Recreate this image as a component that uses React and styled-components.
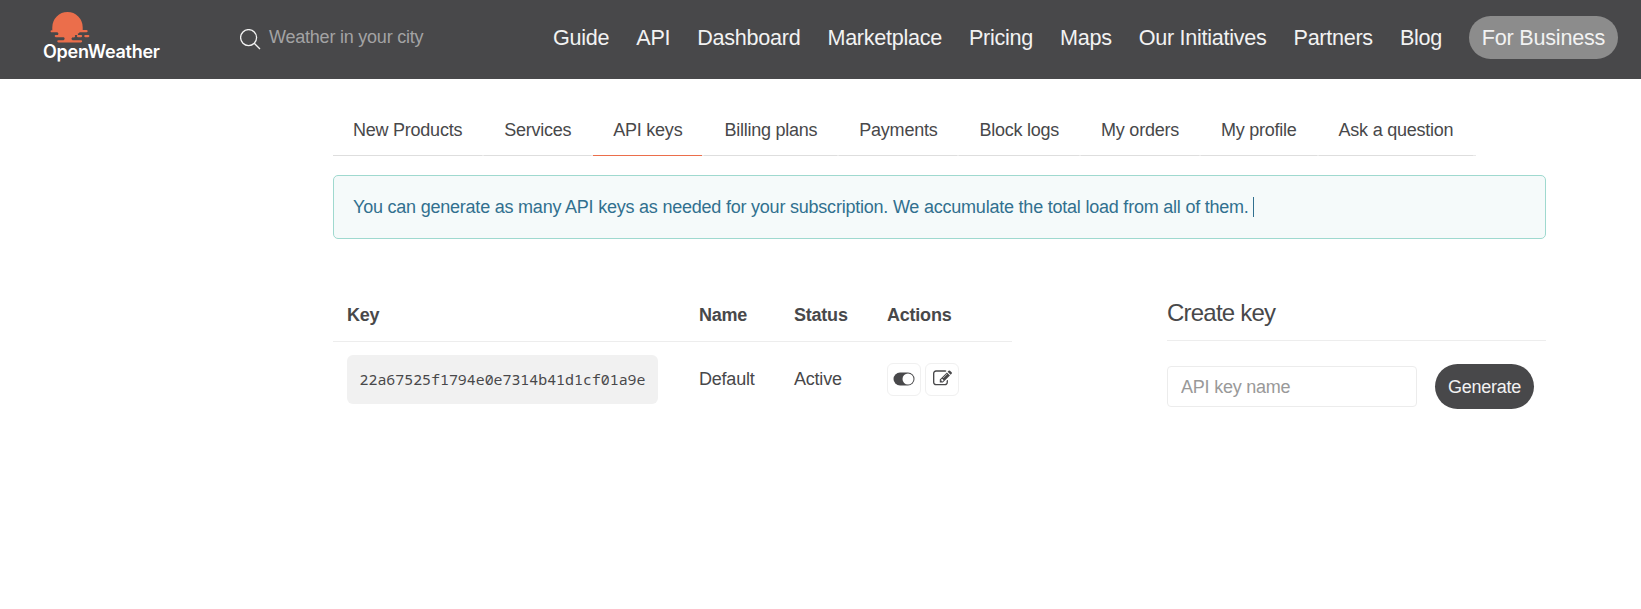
import React from "react";
import styled, { createGlobalStyle } from "styled-components";

const GlobalStyle = createGlobalStyle`
  * { box-sizing: border-box; }
  body {
    margin: 0;
    background: #fff;
    color: #48484a;
    font-family: "Liberation Sans", Arial, sans-serif;
    font-size: 18px;
    line-height: 24px;
    letter-spacing: -0.22px;
  }
`;

const Header = styled.header`
  display: flex;
  align-items: flex-start;
  height: 79px;
  padding: 0 23px 0 43px;
  background: #48484a;
`;

const Logo = styled.a`
  display: flex;
  flex-direction: column;
  width: 197px;
  padding-top: 11px;
  color: #fff;
`;

const LogoMark = styled.svg`
  display: block;
  width: 42px;
  height: 33px;
  margin-left: 6px;
`;

const LogoText = styled.span`
  margin-top: -2px;
  font-family: Inter, sans-serif;
  font-size: 18px;
  font-weight: 600;
  line-height: 20px;
  letter-spacing: -0.27px;
`;

const Search = styled.div`
  display: flex;
  gap: 8px;
  padding-top: 25px;
  color: #a3a3a4;
`;

const SearchIcon = styled.svg`
  width: 21px;
  height: 21px;
  margin-top: 4px;
`;

const Nav = styled.nav`
  display: flex;
  align-items: center;
  gap: 27px;
  height: 43px;
  margin: 16px 0 0 auto;
  font-size: 21.6px;
  letter-spacing: -0.28px;
  color: #f2f2f2;
  white-space: nowrap;
`;

const NavLink = styled.a``;

const BusinessLink = styled.a`
  display: flex;
  align-items: center;
  justify-content: center;
  width: 149px;
  height: 43px;
  border-radius: 22px;
  background: #8c8c8c;
  letter-spacing: -0.22px;
`;

const Main = styled.main`
  padding: 20px 95px 0 333px;
`;

const Tabs = styled.nav`
  display: flex;
  gap: 2px;
  width: 1143px;
  height: 57px;
  background: linear-gradient(#e9e9e9, #e9e9e9) bottom / 100% 1px no-repeat;
  letter-spacing: -0.24px;
`;

const Tab = styled.a`
  padding: 19px 20px 0;
  border-bottom: 1px solid ${(p) => (p.$active ? "#eb6e4b" : "#dedede")};
  white-space: nowrap;
`;

const Notice = styled.div`
  display: flex;
  align-items: center;
  height: 64px;
  margin-top: 19px;
  padding: 0 19px;
  border: 1px solid #9fd9cf;
  border-radius: 5px;
  background: #f5fafa;
  color: #31708f;
`;

const Caret = styled.span`
  width: 1px;
  height: 20px;
  margin-left: 4px;
  background: #31708f;
`;

const Columns = styled.div`
  display: flex;
  justify-content: space-between;
  align-items: flex-start;
  margin-top: 50px;
`;

const KeyTable = styled.table`
  width: 679px;
  border-collapse: separate;
  border-spacing: 0;
  table-layout: fixed;
  text-align: left;
`;

const HeadCell = styled.th`
  width: ${(p) => p.$width}px;
  height: 53px;
  padding: 0 0 1px 14px;
  border-bottom: 1px solid #ededed;
`;

const Cell = styled.td`
  height: 62px;
  padding: 13px 0 0 14px;
`;

const TextCell = styled(Cell)`
  padding-bottom: 2px;
`;

const KeyCode = styled.code`
  display: flex;
  align-items: center;
  justify-content: center;
  width: 311px;
  height: 49px;
  padding-bottom: 1px;
  border-radius: 6px;
  background: #f1f1f1;
  font-family: "Noto Sans Mono", "DejaVu Sans Mono", monospace;
  font-size: 14.9px;
  letter-spacing: 0;
`;

const Actions = styled.div`
  display: flex;
  gap: 4px;
`;

const IconButton = styled.button`
  display: flex;
  align-items: center;
  justify-content: center;
  width: 34px;
  height: 33px;
  padding: 0 0 2px;
  border: 1px solid #f0f0f0;
  border-radius: 6px;
  background: #fff;
  color: #48484a;
`;

const CreatePanel = styled.section`
  width: 379px;
`;

const PanelTitle = styled.h3`
  height: 52px;
  margin: 0;
  padding-top: 12px;
  border-bottom: 1px solid #ededed;
  font-size: 24px;
  font-weight: 400;
  letter-spacing: -0.77px;
`;

const Form = styled.form`
  display: flex;
  align-items: center;
  gap: 18px;
  margin-top: 23px;
`;

const KeyInput = styled.input`
  width: 250px;
  height: 41px;
  padding: 1px 13px 0;
  border: 1px solid #ececec;
  border-radius: 4px;
  font: inherit;
  letter-spacing: inherit;
  &::placeholder { color: #999; opacity: 1; }
`;

const GenerateButton = styled.button`
  width: 99px;
  height: 45px;
  padding: 0;
  border: 0;
  border-radius: 23px;
  background: #48484a;
  color: #f2f2f2;
  font: inherit;
  letter-spacing: -0.27px;
`;

const NAV = ["Guide", "API", "Dashboard", "Marketplace", "Pricing", "Maps", "Our Initiatives", "Partners", "Blog"];
const TABS = ["New Products", "Services", "API keys", "Billing plans", "Payments", "Block logs", "My orders", "My profile", "Ask a question"];
const KEYS = [{ key: "22a67525f1794e0e7314b41d1cf01a9e", name: "Default", status: "Active" }];

const ToggleIcon = () => (
  <svg width="22" height="14" viewBox="0 0 22 14">
    <rect x="0.5" y="0.5" width="21" height="13" rx="6.5" fill="currentColor" />
    <circle cx="15" cy="7" r="5.5" fill="#fff" />
  </svg>
);

const EditIcon = () => (
  <svg width="19" height="19" viewBox="0 0 1792 1792" fill="currentColor">
    <path d="M888 1184l116-116-152-152-116 116v56h96v96h56zm440-720q-16-16-33 1l-350 350q-17 17-1 33t33-1l350-350q17-17 1-33zm80 594v190q0 119-84.5 203.5t-203.5 84.5h-832q-119 0-203.5-84.5t-84.5-203.5v-832q0-119 84.5-203.5t203.5-84.5h832q63 0 117 25 15 7 18 23 3 17-9 29l-49 49q-14 14-32 8-23-6-45-6h-832q-66 0-113 47t-47 113v832q0 66 47 113t113 47h832q66 0 113-47t47-113v-126q0-13 9-22l64-64q15-15 35-7t20 29zm-96-738l288 288-672 672h-288v-288zm444 132l-92 92-288-288 92-92q28-28 68-28t68 28l152 152q28 28 28 68t-28 68z" />
  </svg>
);

export default function App() {
  return (
    <>
      <GlobalStyle />
      <Header>
        <Logo>
          <LogoMark viewBox="49 11 42 33" fill="#eb6e4b">
            <path d="M52.3 30.5V27.3a15.2 15.2 0 0 1 30.4 0V30H86.5a1.1 1.1 0 0 1 0 2.3H80c-1 0-1 1.4-2.6 1.6 1 .2.8 1 .2 1.1h-3v2.2h-2c-1.5.6-1.5 2.4 0 3H81a1.1 1.1 0 0 1 0 2.3H58.4a1.1 1.1 0 0 1 0-2.3h5.2c1.4-.7 1.4-2.4 0-3h-7.8a1.1 1.1 0 0 1 0-2.2h2c1-.6.8-2.4-.6-2.7H51.2a1.1 1.1 0 0 1 0-2z" />
            <rect x="72" y="35" width="3.2" height="2.2" rx="1.1" />
            <rect x="76.8" y="35" width="5.4" height="2.2" rx="1.1" />
            <rect x="84.2" y="35" width="5.2" height="2.2" rx="1.1" />
          </LogoMark>
          <LogoText>OpenWeather</LogoText>
        </Logo>
        <Search>
          <SearchIcon viewBox="0 0 21 21" fill="none" stroke="#f2f2f2" strokeWidth="1.3">
            <circle cx="8.6" cy="8.6" r="8" />
            <path d="M14.2 14.2L20 20" />
          </SearchIcon>
          <span>Weather in your city</span>
        </Search>
        <Nav>
          {NAV.map((label) => <NavLink key={label}>{label}</NavLink>)}
          <BusinessLink>For Business</BusinessLink>
        </Nav>
      </Header>
      <Main>
        <Tabs>
          {TABS.map((label) => <Tab key={label} $active={label === "API keys"}>{label}</Tab>)}
        </Tabs>
        <Notice>
          You can generate as many API keys as needed for your subscription. We accumulate the total load from all of them.
          <Caret />
        </Notice>
        <Columns>
          <KeyTable>
            <thead>
              <tr>
                <HeadCell $width={352}>Key</HeadCell>
                <HeadCell $width={95}>Name</HeadCell>
                <HeadCell $width={93}>Status</HeadCell>
                <HeadCell $width={139}>Actions</HeadCell>
              </tr>
            </thead>
            <tbody>
              {KEYS.map((row) => (
                <tr key={row.key}>
                  <Cell><KeyCode>{row.key}</KeyCode></Cell>
                  <TextCell>{row.name}</TextCell>
                  <TextCell>{row.status}</TextCell>
                  <Cell>
                    <Actions>
                      <IconButton type="button"><ToggleIcon /></IconButton>
                      <IconButton type="button"><EditIcon /></IconButton>
                    </Actions>
                  </Cell>
                </tr>
              ))}
            </tbody>
          </KeyTable>
          <CreatePanel>
            <PanelTitle>Create key</PanelTitle>
            <Form>
              <KeyInput placeholder="API key name" />
              <GenerateButton type="button">Generate</GenerateButton>
            </Form>
          </CreatePanel>
        </Columns>
      </Main>
    </>
  );
}
